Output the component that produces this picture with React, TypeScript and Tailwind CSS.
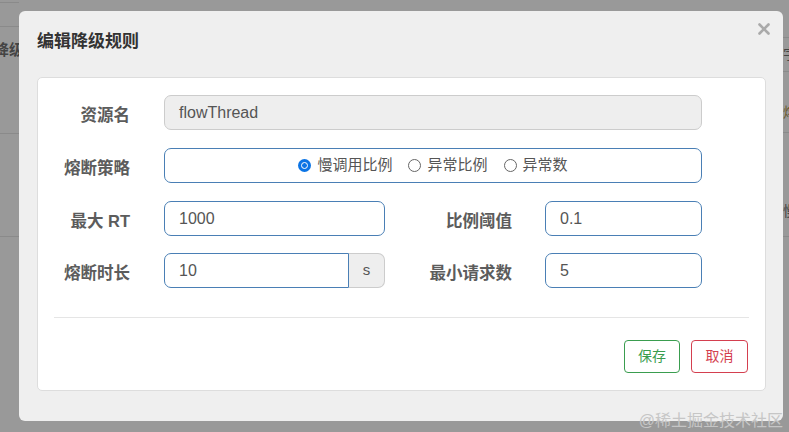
import { X } from "lucide-react";

const font = {
  fontFamily: '"Liberation Sans", Arial, "Noto Sans CJK SC", sans-serif',
};

function Label({ text, w }: { text: string; w: string }) {
  return (
    <div
      className={`${w} shrink-0 pt-[6px] text-right text-[16.5px] font-bold text-[#5c5c5c]`}
    >
      {text}
    </div>
  );
}

function TextInput({ value, w }: { value: string; w: string }) {
  return (
    <div
      className={`${w} flex h-[35px] items-center rounded-[7px] border border-[#4a7fb5] bg-white px-[14px] text-[16px] text-[#555]`}
    >
      {value}
    </div>
  );
}

function Radio({ label, checked }: { label: string; checked?: boolean }) {
  return (
    <label className="flex items-center gap-[6px]">
      {checked ? (
        <span className="flex h-[13px] w-[13px] items-center justify-center rounded-full bg-[#0b74e5]">
          <span className="h-[7px] w-[7px] rounded-full border-[1.5px] border-white bg-[#0b74e5]" />
        </span>
      ) : (
        <span className="h-[13px] w-[13px] rounded-full border border-[#666] bg-white" />
      )}
      <span className="text-[15px] text-[#555]">{label}</span>
    </label>
  );
}

export default function App() {
  return (
    <div
      className="relative h-[432px] w-[789px] overflow-hidden bg-[#999]"
      style={font}
    >
      {/* page behind the overlay */}
      <div className="flex h-full justify-between">
        <div className="w-[19px]">
          <div className="h-[3px] border-b border-[#8a8a8a]" />
          <div className="h-[24px] border-b border-[#8a8a8a]" />
          <div className="h-[107px] border-b border-[#8a8a8a] pt-[12px] text-[15px] font-bold text-[#444]">
            <span className="-ml-[6px] block whitespace-nowrap">降级</span>
          </div>
          <div className="h-[103px] border-b border-[#8a8a8a]" />
        </div>
        <div className="w-[6px]">
          <div className="h-[38px] border-b border-[#8a8a8a]" />
          <div className="h-[34px] border-b border-[#8a8a8a] pt-[6px] text-[14px] text-[#444]">
            <span className="block whitespace-nowrap">字</span>
          </div>
          <div className="h-[61px] border-b border-[#8a8a8a] pt-[30px] text-[14px] text-[#6a5a30]">
            <span className="block whitespace-nowrap">熔</span>
          </div>
          <div className="h-[104px] border-b border-[#8a8a8a] pt-[68px] text-[14px] text-[#444]">
            <span className="block whitespace-nowrap">慢</span>
          </div>
        </div>
      </div>

      {/* modal */}
      <div className="absolute left-[19px] top-[11px] flex h-[410px] w-[764px] flex-col rounded-[6px] bg-[#efefef]">
        <div className="flex h-[66px] items-start justify-between pl-[18px] pr-[10px]">
          <div className="pt-[20px] text-[17px] font-bold leading-[22px] text-[#333]">
            编辑降级规则
          </div>
          <X className="mt-[9px] h-[18px] w-[18px] text-[#aaa]" strokeWidth={3.5} />
        </div>

        <div className="ml-[18px] flex h-[314px] w-[729px] flex-col rounded-[5px] border border-[#ddd] bg-white pt-[17px]">
          <div className="flex items-center">
            <Label text="资源名" w="w-[92px]" />
            <div className="ml-[34px] flex h-[35px] w-[538px] items-center rounded-[7px] border border-[#ccc] bg-[#eee] px-[14px] text-[16px] text-[#555]">
              flowThread
            </div>
          </div>

          <div className="mt-[18px] flex items-center">
            <Label text="熔断策略" w="w-[92px]" />
            <div className="ml-[34px] flex h-[35px] w-[538px] items-center justify-center gap-[16px] rounded-[7px] border border-[#4a7fb5] bg-white">
              <Radio label="慢调用比例" checked />
              <Radio label="异常比例" />
              <Radio label="异常数" />
            </div>
          </div>

          <div className="mt-[18px] flex items-center">
            <Label text="最大 RT" w="w-[92px]" />
            <div className="ml-[34px]">
              <TextInput value="1000" w="w-[221px]" />
            </div>
            <Label text="比例阈值" w="w-[127px]" />
            <div className="ml-[33px]">
              <TextInput value="0.1" w="w-[157px]" />
            </div>
          </div>

          <div className="mt-[17px] flex items-center">
            <Label text="熔断时长" w="w-[92px]" />
            <div className="ml-[34px] flex h-[35px] w-[221px]">
              <div className="flex w-[185px] items-center rounded-l-[7px] border border-[#4a7fb5] bg-white px-[14px] text-[16px] text-[#555]">
                10
              </div>
              <div className="flex w-[36px] items-center justify-center rounded-r-[7px] border border-l-0 border-[#ccc] bg-[#eee] text-[15px] text-[#555]">
                s
              </div>
            </div>
            <Label text="最小请求数" w="w-[127px]" />
            <div className="ml-[33px]">
              <TextInput value="5" w="w-[157px]" />
            </div>
          </div>

          <div className="mx-[16px] mt-[29px] border-t border-[#e5e5e5]" />

          <div className="mr-[17px] mt-[22px] flex justify-end gap-[11px]">
            <button className="flex h-[33px] w-[56px] items-center justify-center rounded-[4px] border border-[#3a9d4f] bg-white text-[14px] text-[#3a9d4f]">
              保存
            </button>
            <button className="flex h-[33px] w-[57px] items-center justify-center rounded-[4px] border border-[#d43f4f] bg-white text-[14px] text-[#d43f4f]">
              取消
            </button>
          </div>
        </div>
      </div>

      {/* watermark */}
      <div className="absolute bottom-[1px] right-[6px] text-[16px] leading-[20px] text-[#c6c6c6]">
        @稀土掘金技术社区
      </div>
    </div>
  );
}
